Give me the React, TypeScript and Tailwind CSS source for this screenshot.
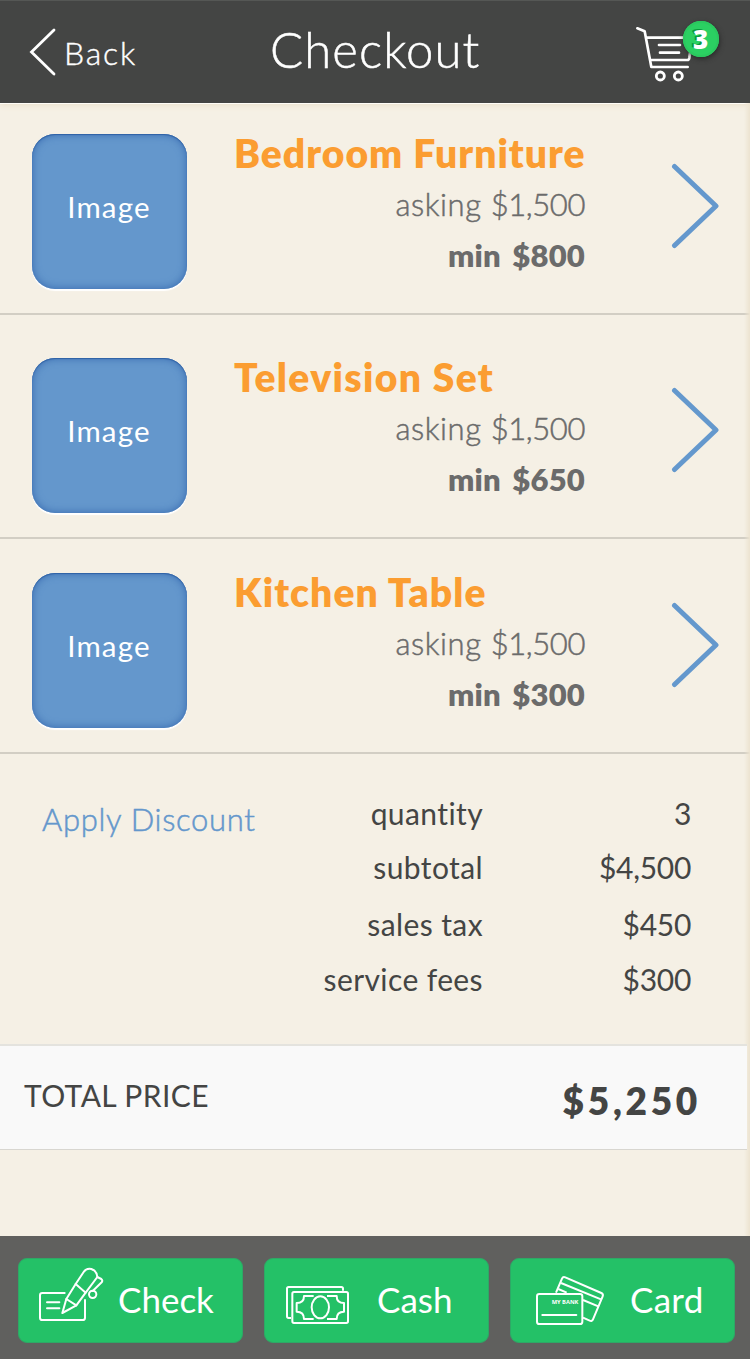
import React from 'react';

interface Item {
  name: string;
  asking: string;
  min: string;
  rowClass: string;
  nameClass: string;
}

const ITEMS: Item[] = [
  { name: 'Bedroom Furniture', asking: '$1,500', min: '$800', rowClass: 'h-[212px] pt-[31px]', nameClass: 'tracking-[1px]' },
  { name: 'Television Set', asking: '$1,500', min: '$650', rowClass: 'h-[224px] pt-[43px]', nameClass: 'tracking-[1.35px]' },
  { name: 'Kitchen Table', asking: '$1,500', min: '$300', rowClass: 'h-[215px] pt-[34px]', nameClass: 'tracking-[1.1px]' },
];

const SUMMARY = [
  { label: 'quantity', value: '3', rowClass: 'h-[54px]' },
  { label: 'subtotal', value: '$4,500', rowClass: 'h-[55px]' },
  { label: 'sales tax', value: '$450', rowClass: 'h-[58px]' },
  { label: 'service fees', value: '$300', rowClass: 'h-[53px]' },
];

const CartIcon = () => (
  <svg
    viewBox="102 72 180 180"
    className="w-[60px] h-[60px]"
    fill="none"
    stroke="#fff"
    strokeWidth="8"
    strokeLinecap="round"
    strokeLinejoin="round"
  >
    <path d="M112 85 L134 94 L154 201 H263" />
    <path d="M141 113 H262" />
    <path d="M155 180 H262 Q267 180 268 174 L272 145" />
    <path d="M177 135 H240 M180 158 H237" />
    <circle cx="181" cy="228" r="12" strokeWidth="8.5" />
    <circle cx="235" cy="228" r="12" strokeWidth="8.5" />
  </svg>
);

const CheckIcon = () => (
  <svg
    viewBox="111 96 201 168"
    className="w-[67px] h-[56px]"
    fill="none"
    stroke="#fff"
    strokeWidth="6"
    strokeLinecap="round"
    strokeLinejoin="round"
  >
    <path d="M194 174 H127 Q120 174 120 181 V248 Q120 255 127 255 H248 Q255 255 255 248 V195" />
    <path d="M141 202 H178 M141 220 H178" />
    <path d="M187 234 L199 192 L227 147 L251 111 Q259 99 274 102 Q291 108 292 126 L257 173 L229 211 Z" />
    <path d="M199 192 L229 211 M227 147 L257 173" />
    <path d="M292 126 L304 132 Q309 136 305 142 L278 168" />
    <circle cx="278" cy="178" r="11" />
  </svg>
);

const CashIcon = () => (
  <svg
    viewBox="90 147 198 126"
    className="w-[66px] h-[42px]"
    fill="none"
    stroke="#fff"
    strokeWidth="6"
    strokeLinejoin="round"
  >
    <path d="M264 167 V161 Q264 156 259 156 H101 Q96 156 96 161 V244 Q96 249 101 249 H108" />
    <rect x="112" y="171" width="167" height="93" rx="5" />
    <ellipse cx="196" cy="217" rx="26" ry="33" />
    <path d="M176 183 H147 Q147 204 125 204 V230 Q147 230 147 252 H176" />
    <path d="M216 183 H245 Q245 204 267 204 V230 Q245 230 245 252 H216" />
  </svg>
);

const CardIcon = () => (
  <svg
    viewBox="102 117 216 156"
    className="w-[72px] h-[52px]"
    fill="none"
    stroke="#fff"
    strokeWidth="6"
    strokeLinejoin="round"
  >
    <path d="M168 173 L186 131 Q189 124 196 127 L304 174 Q311 177 308 184 L279 253 Q276 260 269 257 L249 248" />
    <path d="M183 144 L303 193 M175 162 L200 173 M249 195 L295 214" />
    <rect x="111" y="177" width="136" height="90" rx="7" />
    <path d="M127 240 H229" strokeLinecap="round" />
    <text x="155" y="208" fill="#fff" stroke="none" fontSize="18" fontWeight="700" fontFamily="Open Sans" textLength="80" lengthAdjust="spacingAndGlyphs">
      MY BANK
    </text>
  </svg>
);

const Chevron = () => (
  <svg
    viewBox="0 0 48 86"
    className="w-[48px] h-[86px]"
    fill="none"
    stroke="#6498cd"
    strokeWidth="5"
    strokeLinecap="round"
    strokeLinejoin="round"
  >
    <path d="M3.500 3.500 L45 43 L3.500 82.500" />
  </svg>
);

const ItemRow: React.FC<{ item: Item }> = ({ item }) => (
  <div className={`flex items-start pl-8 border-b-2 border-[#d2cec4] ${item.rowClass}`}>
    <div className="w-[155px] h-[155px] rounded-[23px] bg-[#6497cc] flex items-center justify-center text-white text-[29.5px] tracking-[1.2px] pb-[9px] pr-px shadow-[inset_0_0_8px_#3568ae,inset_0_1px_1px_#2a5c9f,0_2px_1px_#ffffff]">
      Image
    </div>
    <div className="ml-[47px] w-[351px] -mt-[6px] text-[31px] leading-[51px] text-[#6b6b6b] text-right">
      <h2 className={`text-left whitespace-nowrap text-[39px] leading-[51px] font-extrabold text-[#fb9d31] ${item.nameClass}`}>
        {item.name}
      </h2>
      <p className="font-light [-webkit-text-stroke:0.5px_currentColor]">
        <span className="tracking-[0.6px]">asking </span>
        <span className="tracking-[-0.4px]">{item.asking}</span>
      </p>
      <p className="font-extrabold tracking-[0.2px] [word-spacing:4px]">min {item.min}</p>
    </div>
    <div className="ml-[86px] mt-[29px]">
      <Chevron />
    </div>
  </div>
);

export default function App() {
  return (
    <div className="relative w-[750px] h-[1359px] flex flex-col overflow-hidden bg-[#f5f0e5] font-['Lato','Liberation_Sans',sans-serif]">
      <header className="h-[103px] shrink-0 flex items-start bg-[#444544] border-t border-[#555755] text-white shadow-[0_1px_0_#fffdf8,0_2px_6px_#eadfca]">
        <button className="flex items-start w-[270px] pl-[29px] pt-[27px]">
          <svg
            viewBox="0 0 28 48"
            className="w-[28px] h-[48px]"
            fill="none"
            stroke="#fff"
            strokeWidth="2.8"
            strokeLinecap="round"
          >
            <path d="M25 2 L2.500 24 L25 46" />
          </svg>
          <span className="ml-[7px] mt-[5px] text-[32px] leading-[40px] font-light tracking-[1.8px] [-webkit-text-stroke:0.4px_currentColor]">
            Back
          </span>
        </button>
        <h1 className="w-[364px] pt-[18px] text-[49px] leading-[60px] font-light tracking-[1.1px] [-webkit-text-stroke:0.5px_currentColor]">
          Checkout
        </h1>
        <div className="relative pt-[23px]">
          <CartIcon />
          <span className="absolute left-[49px] top-[20px] w-9 h-9 rounded-full bg-[#2bd062] flex items-center justify-center pr-px font-['Open_Sans','Liberation_Sans',sans-serif] text-[26px] leading-none font-extrabold [text-shadow:-2px_-1px_0_#079a3b] shadow-[inset_0_0_0_2px_#2bc85f,1px_2px_5px_#2a2a2a]">
            3
          </span>
        </div>
      </header>

      <main className="grow flex flex-col">
        {ITEMS.map((item) => (
          <ItemRow key={item.name} item={item} />
        ))}

        <section className="h-[290px] flex items-start">
          <a className="w-[270px] pl-[42px] mt-[45px] text-[31px] leading-[40px] font-light tracking-[0.7px] whitespace-nowrap text-[#6497cc] [-webkit-text-stroke:0.5px_currentColor]">
            Apply Discount
          </a>
          <dl className="mt-[32px] text-[30px] text-[#444544]">
            {SUMMARY.map((row) => (
              <div key={row.label} className={`flex items-center text-right ${row.rowClass}`}>
                <dt className="w-[213px] tracking-[0.4px]">{row.label}</dt>
                <dd className="w-[208px] tracking-[-0.3px]">{row.value}</dd>
              </div>
            ))}
          </dl>
        </section>

        <section className="relative z-10 w-[747px] h-[106px] flex items-start justify-between pl-[24px] pr-[46px] bg-[#f9f9f9] border-t-2 border-b border-t-[#e4e3de] border-b-[#d8d6d0] text-[#444544]">
          <span className="mt-[29px] text-[30px] leading-[40px] tracking-[0.4px]">TOTAL PRICE</span>
          <span className="mt-[34px] text-[37px] leading-[42px] font-extrabold tracking-[3.7px]">$5,250</span>
        </section>
      </main>

      <footer className="h-[123px] shrink-0 pt-[22px] pl-[18px] flex items-start gap-[21px] bg-[#60605e] text-white text-[35px]">
        <button className="w-[225px] h-[85px] rounded-[9px] border border-[#2ea866] bg-[#24c167] flex items-start">
          <span className="ml-[18px] mt-[8px]"><CheckIcon /></span>
          <span className="ml-[14px] mt-[18px] leading-[44px]">Check</span>
        </button>
        <button className="w-[225px] h-[85px] rounded-[9px] border border-[#2ea866] bg-[#24c167] flex items-start">
          <span className="ml-[20px] mt-[25px]"><CashIcon /></span>
          <span className="ml-[26px] mt-[18px] leading-[44px]">Cash</span>
        </button>
        <button className="w-[225px] h-[85px] rounded-[9px] border border-[#2ea866] bg-[#24c167] flex items-start">
          <span className="ml-[23px] mt-[15px]"><CardIcon /></span>
          <span className="ml-[24px] mt-[18px] leading-[44px] tracking-[0.3px]">Card</span>
        </button>
      </footer>

      {/* soft edge down the right side of the list */}
      <div className="absolute right-0 top-[103px] w-[6px] h-[1133px] bg-linear-to-r from-transparent to-[#ece3d0]" />
    </div>
  );
}
